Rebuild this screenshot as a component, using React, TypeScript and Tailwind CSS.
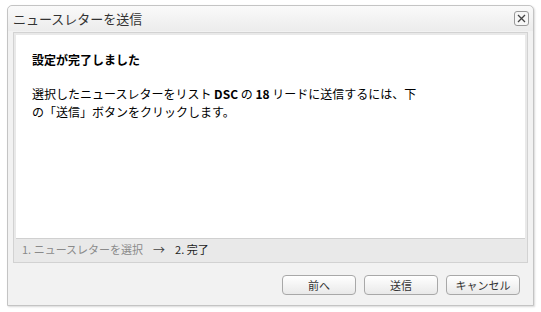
const font = { fontFamily: '"Noto Sans CJK JP", "Liberation Sans", sans-serif' };

function CloseButton() {
  return (
    <button className="flex h-[15px] w-[15px] items-center justify-center rounded-[3px] border border-[#9a9a9a] bg-[#f7f7f7]">
      <svg width="9" height="9" viewBox="0 0 9 9">
        <path d="M1 1L8 8M8 1L1 8" stroke="#444" strokeWidth="1.3" />
      </svg>
    </button>
  );
}

function Btn({ label }: { label: string }) {
  return (
    <button className="h-[20px] w-[74px] rounded-[4px] border border-[#a8a8a8] bg-gradient-to-b from-[#ffffff] to-[#e9e9e9] text-[11px] leading-none text-[#333]">
      {label}
    </button>
  );
}

export default function App() {
  return (
    <div className="h-[312px] w-[541px] bg-white pl-[7px] pt-[5px]" style={font}>
      <div className="flex h-[301px] w-[527px] flex-col rounded-t-[5px] border border-[#c4c4c4] bg-[#f2f2f2] shadow-[1px_1px_2px_rgba(0,0,0,0.15)]">
        <div className="flex h-[25px] items-center justify-between rounded-t-[5px] bg-gradient-to-b from-[#fafafa] to-[#ececec] pl-[5px] pr-[4px]">
          <span className="text-[13px] text-[#333]">ニュースレターを送信</span>
          <CloseButton />
        </div>
        <div className="mx-[5px] mt-[1px] flex h-[231px] flex-col border border-[#d2d2d2] bg-[#e9e9e9] p-[2px]">
          <div className="flex-1 bg-white pl-[16px] pt-[16px]">
            <div className="text-[12px] font-bold leading-[18px] text-black">設定が完了しました</div>
            <p className="mt-[16px] w-[392px] text-[12px] leading-[18px] text-black">
              選択したニュースレターをリスト <b>DSC</b> の <b>18</b> リードに送信するには、下の「送信」ボタンをクリックします。
            </p>
          </div>
          <div className="flex h-[22px] items-center border-t border-[#d0d0d0] pl-[6px] text-[11px]">
            <span className="text-[#8a8a8a]">1. ニュースレターを選択</span>
            <span className="mx-[10px] text-[12px] text-[#444]">→</span>
            <span className="text-[#222]">2. 完了</span>
          </div>
        </div>
        <div className="flex flex-1 items-center justify-end gap-[8px] pr-[13px] pt-[2px]">
          <Btn label="前へ" />
          <Btn label="送信" />
          <Btn label="キャンセル" />
        </div>
      </div>
    </div>
  );
}
